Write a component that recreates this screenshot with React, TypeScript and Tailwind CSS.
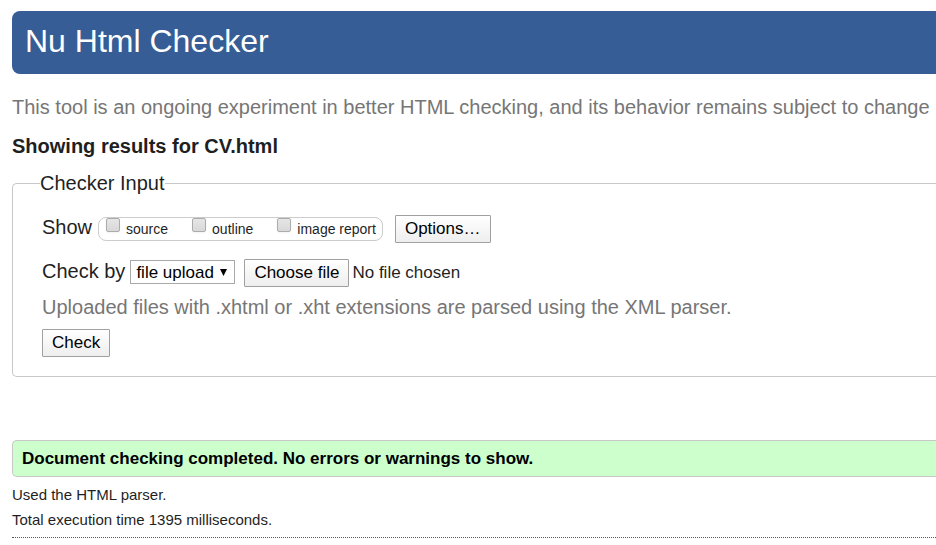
import { useRef, useState } from 'react';

const buttonStyle =
  'h-7 border border-[#a0a0a0] rounded-[1px] bg-linear-to-b from-white to-[#eeeeee] px-[9px] text-[17px] leading-5 text-black';

const reports = [
  { id: 'source', label: 'source' },
  { id: 'outline', label: 'outline' },
  { id: 'image-report', label: 'image report' },
];

function ReportOption({ id, label }: { id: string; label: string }) {
  return (
    <div className="flex h-full items-start gap-[6px]">
      <input
        id={id}
        type="checkbox"
        className="size-[14px] appearance-none rounded-[2px] border border-[#acacac] bg-linear-to-b from-[#e6e6e6] to-[#d8d8d8] shadow-xs checked:bg-[#606060]"
      />
      <label htmlFor={id} className="text-sm leading-[22px]">
        {label}
      </label>
    </div>
  );
}

function FileChooser() {
  const picker = useRef<HTMLInputElement>(null);
  const [name, setName] = useState('No file chosen');
  return (
    <div className="flex items-center gap-[3px]">
      <button type="button" className={buttonStyle} onClick={() => picker.current?.click()}>
        Choose file
      </button>
      <input
        ref={picker}
        type="file"
        hidden
        aria-label="Choose file"
        onChange={(e) => setName(e.target.files?.[0]?.name ?? 'No file chosen')}
      />
      <span className="text-[17px] leading-5">{name}</span>
    </div>
  );
}

export default function App() {
  return (
    <div className="min-h-screen overflow-x-hidden bg-white pt-[11px] pl-3 font-['Liberation_Sans',Arial,sans-serif] text-[#1f1f1f]">
      <header className="rounded-l-lg bg-[#365d95] px-[13px] pt-[10px] pb-[13px] text-white">
        <h1 className="text-[32px] leading-10">Nu Html Checker</h1>
      </header>
      <main>
        <p className="mt-[21px] text-xl leading-6 whitespace-nowrap text-[#767676]">
          This tool is an ongoing experiment in better HTML checking, and its behavior remains subject to change
        </p>
        <h2 className="mt-[15px] text-xl leading-6 font-bold">Showing results for CV.html</h2>
        <form onSubmit={(e) => e.preventDefault()}>
          <fieldset className="mt-[13px] rounded-l-[5px] border border-r-0 border-[#c8c8c8] pl-[29px] pb-[19px]">
            <legend className="-ml-[2px] text-xl leading-6">Checker Input</legend>
            <div className="mt-5 flex items-center gap-3">
              <div className="flex items-center gap-[6px]">
                <span className="pb-1 text-xl leading-6">Show</span>
                <div className="flex h-6 gap-6 rounded-lg border border-[#cccccc] pr-[6px] pl-[7px]">
                  {reports.map((r) => (
                    <ReportOption key={r.id} {...r} />
                  ))}
                </div>
              </div>
              <button type="button" className={buttonStyle}>
                Options…
              </button>
            </div>
            <div className="mt-4 flex items-center">
              <label htmlFor="method" className="pb-1 text-xl leading-6">
                Check by
              </label>
              <div className="relative mr-[9px] ml-[5px] pb-[2px]">
                <select
                  id="method"
                  className="block h-6 w-[105px] appearance-none border border-[#a9a9a9] bg-white pt-[2px] pl-[5px] text-[17px] leading-5 text-black"
                >
                  <option>file upload</option>
                  <option>address</option>
                  <option>text input</option>
                </select>
                <svg
                  viewBox="0 0 7 7"
                  className="pointer-events-none absolute top-[9px] right-2 size-[7px]"
                  aria-hidden="true"
                >
                  <path d="M0 0h7L3.5 7z" fill="#000" />
                </svg>
              </div>
              <FileChooser />
            </div>
            <p className="mt-2 text-xl leading-6 text-[#767676]">
              Uploaded files with .xhtml or .xht extensions are parsed using the XML parser.
            </p>
            <button type="submit" className={`mt-[10px] block ${buttonStyle}`}>
              Check
            </button>
          </fieldset>
        </form>
        <p className="mt-[63px] rounded-l-[5px] border border-r-0 border-[#c8c8c8] bg-[#ccffcc] px-[9px] pt-[7px] pb-[6px] text-[17px] leading-[22px] font-bold text-black">
          Document checking completed. No errors or warnings to show.
        </p>
        <div className="mt-2 border-b border-dotted border-[#555555] pb-[7px] text-[15px] leading-5">
          <p>Used the HTML parser.</p>
          <p className="mt-[5px]">Total execution time 1395 milliseconds.</p>
        </div>
      </main>
    </div>
  );
}
